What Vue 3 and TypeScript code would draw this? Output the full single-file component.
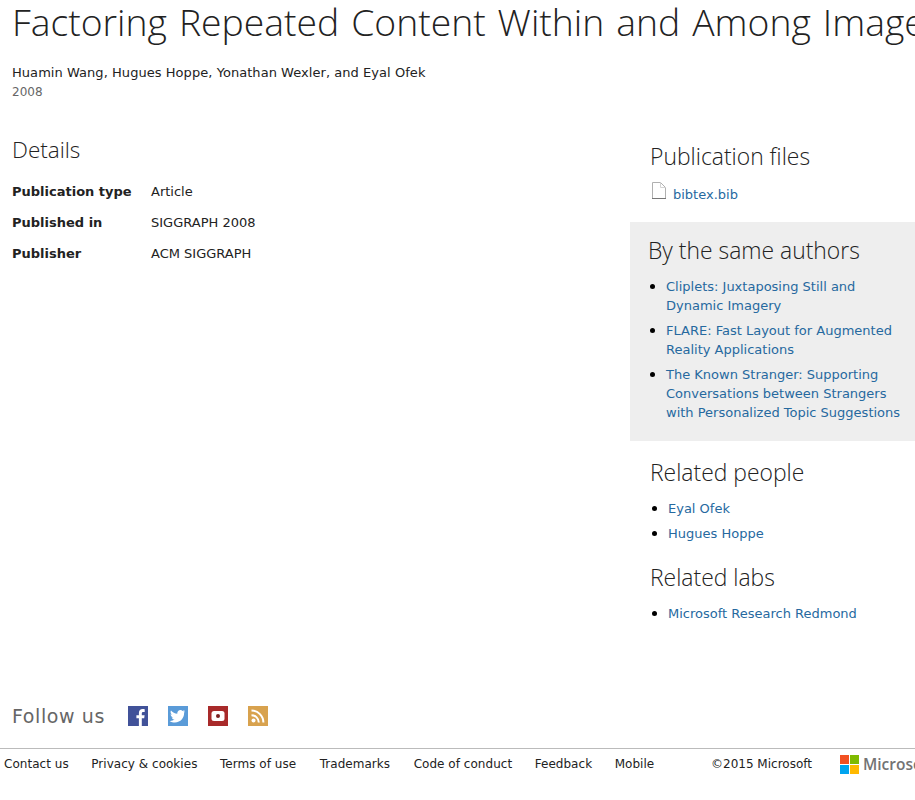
<script setup lang="ts">
const details: [string, string][] = [
  ['Publication type', 'Article'],
  ['Published in', 'SIGGRAPH 2008'],
  ['Publisher', 'ACM SIGGRAPH'],
]
const sameAuthors = [
  'Cliplets: Juxtaposing Still and Dynamic Imagery',
  'FLARE: Fast Layout for Augmented Reality Applications',
  'The Known Stranger: Supporting Conversations between Strangers with Personalized Topic Suggestions',
]
const people = ['Eyal Ofek', 'Hugues Hoppe']
const links = ['Contact us', 'Privacy & cookies', 'Terms of use', 'Trademarks', 'Code of conduct', 'Feedback', 'Mobile']
</script>

<template>
  <div class="page">
    <header class="head">
      <h1>Factoring Repeated Content Within and Among Images</h1>
      <p class="authors">Huamin Wang, Hugues Hoppe, Yonathan Wexler, and Eyal Ofek</p>
      <p class="year">2008</p>
    </header>
    <div class="columns">
      <main class="main">
        <h2 class="details-title">Details</h2>
        <dl class="details">
          <div v-for="d in details" :key="d[0]" class="row">
            <dt>{{ d[0] }}</dt>
            <dd>{{ d[1] }}</dd>
          </div>
        </dl>
      </main>
      <aside class="side">
        <section class="files">
          <h2>Publication files</h2>
          <div class="file">
            <svg width="15" height="17" viewBox="0 0 15 17" fill="none" stroke-width="1">
              <path d="M1.5 16.5V.5H9.5L14.5 5.5V16.5" stroke="#b0b0b0" />
              <path d="M9.5 .5V5.5H14.5" stroke="#d4d4d4" />
              <path d="M1 16.5H15" stroke="#777" />
            </svg>
            <a>bibtex.bib</a>
          </div>
        </section>
        <section class="same">
          <h2>By the same authors</h2>
          <ul>
            <li v-for="s in sameAuthors" :key="s"><a>{{ s }}</a></li>
          </ul>
        </section>
        <section class="related">
          <h2>Related people</h2>
          <ul>
            <li v-for="p in people" :key="p"><a>{{ p }}</a></li>
          </ul>
          <h2 class="labs">Related labs</h2>
          <ul>
            <li><a>Microsoft Research Redmond</a></li>
          </ul>
        </section>
      </aside>
    </div>
    <div class="follow">
      <span class="follow-label">Follow us</span>
      <svg class="social" width="20" height="20" viewBox="0 0 20 20">
        <rect width="20" height="20" fill="#415299" />
        <path d="M13.8 20V12.3H16.2L16.6 9.3H13.8V7.4C13.8 6.5 14.1 5.9 15.3 5.9H16.7V3.2C16.4 3.2 15.6 3.1 14.6 3.1 12.4 3.1 10.9 4.4 10.9 6.9V9.3H8.4V12.3H10.9V20Z" fill="#fff" />
      </svg>
      <svg class="social" width="20" height="20" viewBox="0 0 20 20">
        <rect width="20" height="20" fill="#5a9bd8" />
        <path d="M17 5.3C16.5 5.6 15.9 5.7 15.3 5.8 15.9 5.4 16.4 4.8 16.6 4.1 16 4.5 15.4 4.7 14.7 4.9 14.1 4.3 13.3 3.9 12.4 3.9 10.7 3.9 9.3 5.3 9.3 7 9.3 7.3 9.3 7.5 9.4 7.7 6.8 7.6 4.5 6.3 3 4.4 2.7 4.9 2.6 5.4 2.6 6 2.6 7.1 3.1 8 4 8.6 3.5 8.6 3 8.4 2.6 8.2 2.6 9.8 3.7 11 5.1 11.3 4.6 11.5 4.1 11.5 3.7 11.4 4 12.6 5.2 13.5 6.6 13.6 5.1 14.7 3.4 15.2 1.6 15 3.2 16 5 16.5 6.9 16.5 12.9 16.5 16.1 11.6 16.1 7.3V6.9C16.1 6.4 16.6 5.9 17 5.3Z" fill="#fff" />
      </svg>
      <svg class="social" width="20" height="20" viewBox="0 0 20 20">
        <rect width="20" height="20" fill="#a82a2a" />
        <rect x="3.5" y="5" width="13" height="10" rx="2.5" fill="#fff" />
        <circle cx="10" cy="10" r="2" fill="#7a2020" />
      </svg>
      <svg class="social" width="20" height="20" viewBox="0 0 20 20">
        <rect width="20" height="20" fill="#d8a24e" />
        <circle cx="5.5" cy="14.5" r="2" fill="#fff" />
        <path d="M3.5 9.2A7.3 7.3 0 0 1 10.8 16.5" fill="none" stroke="#fff" stroke-width="2" />
        <path d="M3.5 4.6A11.9 11.9 0 0 1 15.4 16.5" fill="none" stroke="#fff" stroke-width="2" />
      </svg>
    </div>
    <footer class="foot">
      <nav class="links">
        <a v-for="l in links" :key="l">{{ l }}</a>
      </nav>
      <span class="copy">©2015 Microsoft</span>
      <div class="logo">
        <svg width="19" height="19" viewBox="0 0 19 19">
          <rect width="9" height="9" fill="#f25022" />
          <rect x="10" width="9" height="9" fill="#7fba00" />
          <rect y="10" width="9" height="9" fill="#00a4ef" />
          <rect x="10" y="10" width="9" height="9" fill="#ffb900" />
        </svg>
        <span>Microsoft</span>
      </div>
    </footer>
  </div>
</template>

<style>
html, body { margin: 0; padding: 0; background: #fff; overflow: hidden; }
</style>

<style scoped>
.page {
  width: 915px;
  height: 800px;
  overflow: hidden;
  font-family: "DejaVu Sans", sans-serif;
  font-size: 13px;
  color: #222;
}
h1, h2, p, ul, dl, dd { margin: 0; padding: 0; }
h1, h2 { font-family: "Open Sans", sans-serif; font-weight: 300; color: #222; }
a { color: #26699f; }
li { color: #000; }
li::marker { font-size: 15px; }
.head { padding-left: 12px; }
h1 {
  font-size: 37.3px;
  word-spacing: 2.3px;
  line-height: 46px;
  white-space: nowrap;
  margin-top: -1px;
}
.authors { margin-top: 16px; line-height: 24px; height: 24px; letter-spacing: .05px; }
.year { font-size: 12px; line-height: 14px; color: #666; }
.columns { display: flex; height: 571px; margin-top: 26px; }
.main { width: 630px; padding-left: 12px; box-sizing: border-box; }
.details-title { font-size: 22.5px; line-height: 32px; margin-top: 9px; }
.details { margin-top: 10px; }
.row { display: flex; height: 31px; align-items: center; }
dt { width: 139px; font-weight: 700; }
.side { width: 285px; flex: none; }
.side h2 { font-size: 22.9px; line-height: 32px; }
.files { padding: 16px 0 0 20px; height: 97px; box-sizing: border-box; }
.file { display: flex; align-items: flex-start; margin-top: 8px; }
.file svg { margin: 1px 7px 0 1px; }
.file a { line-height: 22px; margin-top: 3px; }
.same { background: #eeeeee; padding: 13px 12px 11px 18px; height: 219px; box-sizing: border-box; }
.same ul { margin-top: 10px; padding-left: 18px; }
.same li { line-height: 19px; margin-bottom: 6px; }
.related { padding: 16px 0 0 20px; }
.related ul { margin-top: 10px; padding-left: 18px; }
.related li { line-height: 19px; margin-bottom: 6px; }
.related .labs { margin-top: 19px; }
.follow { display: flex; align-items: center; height: 40px; padding-left: 12px; margin-bottom: 12px; }
.follow-label { font-size: 19px; color: #666; letter-spacing: .6px; width: 116px; flex: none; }
.social { margin-right: 20px; }
.foot {
  display: flex;
  align-items: center;
  border-top: 1px solid #bbb;
  height: 30px;
  font-size: 12px;
  white-space: nowrap;
}
.links { display: flex; gap: 22.6px; padding-left: 4px; width: 711px; flex: none; box-sizing: border-box; letter-spacing: .03px; }
.links a { color: #222; }
.links a:nth-child(4), .links a:nth-child(5) { margin-left: 1px; }
.copy { width: 129px; flex: none; }
.logo { display: flex; align-items: center; gap: 4px; flex: none; }
.logo span { font-family: "Open Sans", sans-serif; font-size: 15.5px; font-weight: 600; color: #737373; }
</style>
